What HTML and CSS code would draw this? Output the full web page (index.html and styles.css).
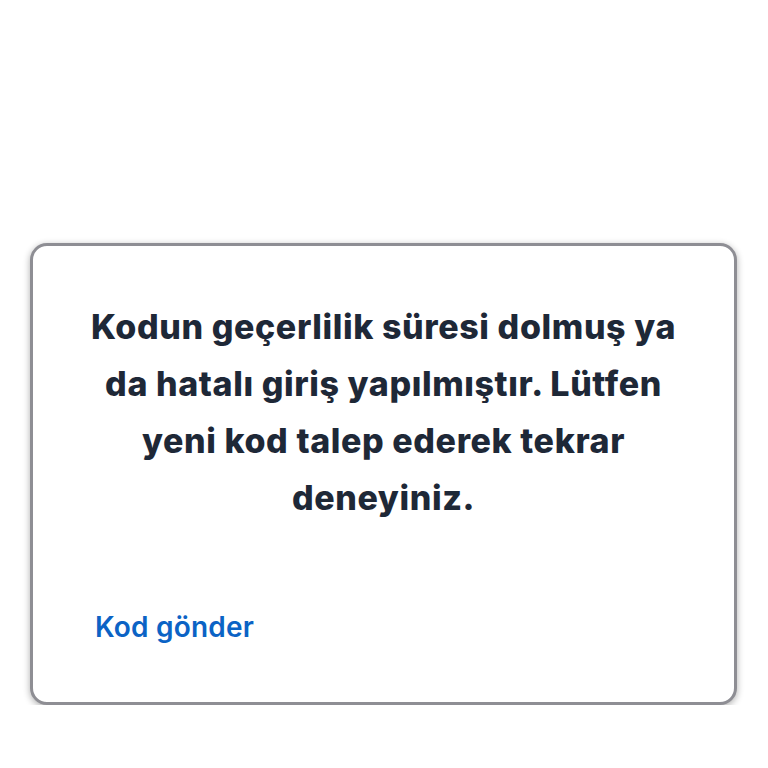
FILE: index.html
```html
<!DOCTYPE html>
<html lang="tr">
<head>
<meta charset="utf-8">
<link rel="stylesheet" href="styles.css">
</head>
<body>
<div class="page">
  <div class="card">
    <p class="message">Kodun geçerlilik süresi dolmuş ya da hatalı giriş yapılmıştır. Lütfen yeni kod talep ederek tekrar deneyiniz.</p>
    <a class="action" href="#">Kod gönder</a>
  </div>
</div>
</body>
</html>
```
FILE: styles.css
```css
html, body {
  margin: 0;
  padding: 0;
  background: #ffffff;
}
.page {
  padding: 243px 31px 0 30px;
  font-family: Inter, "Noto Sans", sans-serif;
}
.card {
  box-sizing: border-box;
  height: 462px;
  border: 3px solid #8e8e94;
  border-radius: 17px;
  box-shadow: 0 2px 7px rgba(0, 0, 0, 0.32);
  background: #ffffff;
  padding: 52px 48px 0 48px;
  display: flex;
  flex-direction: column;
}
.message {
  margin: 0;
  text-align: center;
  font-size: 34px;
  font-weight: 800;
  letter-spacing: 0.6px;
  line-height: 57px;
  color: #1e2837;
}
.action {
  margin-top: 84px;
  margin-left: 14px;
  font-size: 28px;
  font-weight: 600;
  letter-spacing: 0.2px;
  color: #0b63c5;
  text-decoration: none;
  align-self: flex-start;
}
```
